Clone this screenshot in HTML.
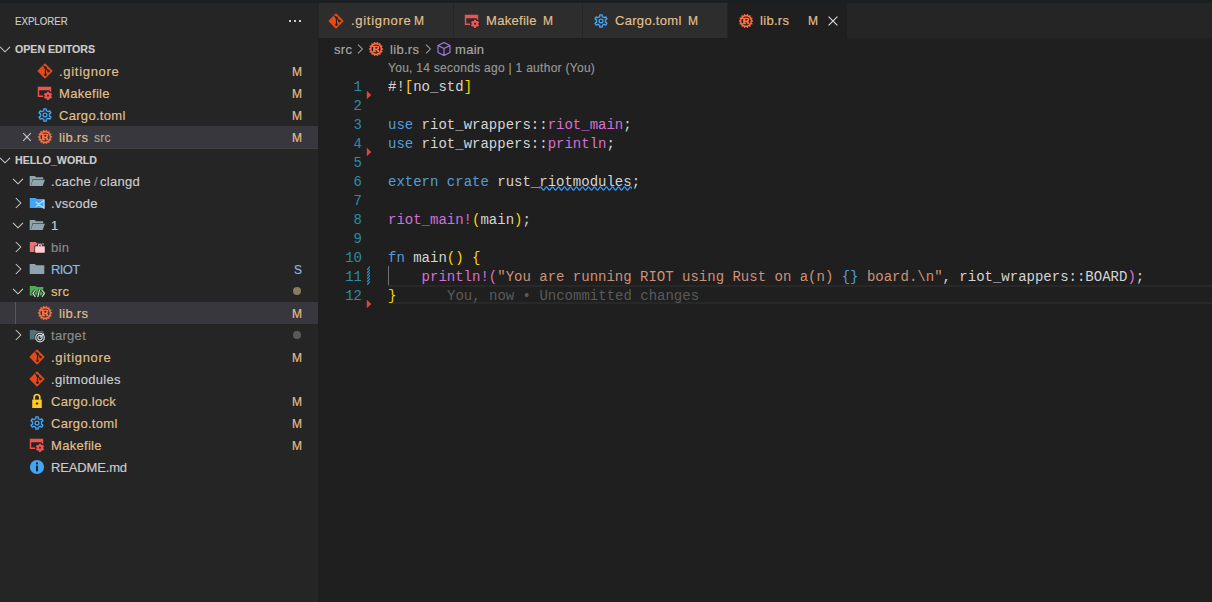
<!DOCTYPE html>
<html><head><meta charset="utf-8">
<style>
*{margin:0;padding:0;box-sizing:border-box}
html,body{width:1212px;height:602px;overflow:hidden;background:#1f1f1f}
body{position:relative;font-family:"Liberation Sans",sans-serif;font-size:13px;color:#cccccc;-webkit-text-stroke:0.15px}
.a{position:absolute;white-space:pre}
.row{position:absolute;left:0;width:318px;height:22px}
.sel{background:#37373d}
.lbl{position:absolute;top:1px;line-height:22px;font-size:13px;letter-spacing:0.3px;white-space:pre}
.mod{color:#e2c08d}
.ign{color:#8c8c8c}
.sub{color:#8db9e2}
.ico{position:absolute}
.badge{position:absolute;left:242px;width:60px;text-align:right;top:1px;line-height:22px;font-size:12px;color:#e2c08d}
.code{position:absolute;-webkit-text-stroke:0;left:388px;padding-top:2px;font-family:"Liberation Mono",monospace;font-size:14px;line-height:19px;height:19px;white-space:pre;color:#d4d4d4}
.ln{position:absolute;-webkit-text-stroke:0;left:330px;width:32px;padding-top:2px;text-align:right;font-family:"Liberation Mono",monospace;font-size:14px;line-height:19px;height:19px;color:#2b8ca8}
.kw{color:#569cd6}
.mac{color:#d670d6}
.str{color:#ce9178}
.br1{color:#ffd700}
.br2{color:#da70d6}
</style></head><body>
<div class="a" style="left:0;top:0;width:1212px;height:3px;background:#1c1f22"></div>
<div class="a" style="left:0;top:3px;width:318px;height:599px;background:#252526"></div>
<div class="a" style="left:318px;top:3px;width:894px;height:35px;background:#252526"></div>
<svg width="0" height="0" style="position:absolute"><defs><symbol id="i-git" viewBox="0 0 16 16"><path d="M8 1.3L14.7 8 8 14.7 1.3 8Z" fill="#e64a19" stroke="#e64a19" stroke-width="1.6" stroke-linejoin="round"/><path d="M6.2 2.6L8.5 4.8V11.6M8.5 4.8L11.5 7.9" fill="none" stroke="#252526" stroke-width="1.2"/><circle cx="8.5" cy="4.8" r="1.3" fill="#252526"/><circle cx="8.5" cy="11.7" r="1.3" fill="#252526"/><circle cx="11.5" cy="8.1" r="1.3" fill="#252526"/></symbol><symbol id="i-make" viewBox="0 0 16 16"><path fill="#ef5350" fill-rule="evenodd" d="M0.8 1.8H14.2V12H0.8Z M2.2 5.2H12.8V10.6H2.2Z"/><path fill="#252526" d="M6.10 10.80 a4.90 4.90 0 1 1 9.80 0 a4.90 4.90 0 1 1 -9.80 0Z"/><path fill="#ef5350" fill-rule="evenodd" d="M9.88 7.70 L9.89 6.65 L12.11 6.65 L12.12 7.70 L13.13 8.28 L14.04 7.76 L15.15 9.69 L14.25 10.22 L14.25 11.38 L15.15 11.91 L14.04 13.84 L13.13 13.32 L12.12 13.90 L12.11 14.95 L9.89 14.95 L9.88 13.90 L8.87 13.32 L7.96 13.84 L6.85 11.91 L7.75 11.38 L7.75 10.22 L6.85 9.69 L7.96 7.76 L8.87 8.28Z M10.00 10.80 a1.00 1.00 0 1 1 2.00 0 a1.00 1.00 0 1 1 -2.00 0Z"/></symbol><symbol id="i-gear" viewBox="0 0 16 16"><path fill="none" stroke="#42a5f5" stroke-width="1.35" stroke-linejoin="round" d="M6.76 3.57 L6.82 1.81 L9.18 1.81 L9.24 3.57 L11.22 4.71 L12.77 3.88 L13.95 5.93 L12.46 6.86 L12.46 9.14 L13.95 10.07 L12.77 12.12 L11.22 11.29 L9.24 12.43 L9.18 14.19 L6.82 14.19 L6.76 12.43 L4.78 11.29 L3.23 12.12 L2.05 10.07 L3.54 9.14 L3.54 6.86 L2.05 5.93 L3.23 3.88 L4.78 4.71Z"/><circle cx="8" cy="8" r="1.9" fill="none" stroke="#42a5f5" stroke-width="1.35"/></symbol><symbol id="i-rust" viewBox="0 0 16 16"><path fill="#ff7043" fill-rule="evenodd" d="M8.56 2.03 L8.92 0.96 L10.22 1.26 L10.08 2.37 L11.10 2.86 L11.88 2.06 L12.93 2.89 L12.32 3.83 L13.02 4.72 L14.08 4.33 L14.66 5.54 L13.70 6.12 L13.95 7.22 L15.07 7.33 L15.07 8.67 L13.95 8.78 L13.70 9.88 L14.66 10.46 L14.08 11.67 L13.02 11.28 L12.32 12.17 L12.93 13.11 L11.88 13.94 L11.10 13.14 L10.08 13.63 L10.22 14.74 L8.92 15.04 L8.56 13.97 L7.44 13.97 L7.08 15.04 L5.78 14.74 L5.92 13.63 L4.90 13.14 L4.12 13.94 L3.07 13.11 L3.68 12.17 L2.98 11.28 L1.92 11.67 L1.34 10.46 L2.30 9.88 L2.05 8.78 L0.93 8.67 L0.93 7.33 L2.05 7.22 L2.30 6.12 L1.34 5.54 L1.92 4.33 L2.98 4.72 L3.68 3.83 L3.07 2.89 L4.12 2.06 L4.90 2.86 L5.92 2.37 L5.78 1.26 L7.08 0.96 L7.44 2.03Z M3.40 8.00 a4.60 4.60 0 1 0 9.20 0 a4.60 4.60 0 1 0 -9.20 0Z"/><path fill="#ff7043" d="M3.6 4.7H9.4C10.6 4.7 11.3 5.5 11.3 6.6 11.3 7.5 10.8 8.1 10.2 8.4 10.8 8.7 11.1 9.2 11.2 9.8L11.6 11.3H9.4L9.1 10C9 9.4 8.7 9.2 8.2 9.2H7.3V10.2H8.3V11.3H4.1V10.2H5.1V5.9H3.6Z"/><path fill="#1f1f1f" d="M7.3 5.9V7.5H8.8C9.3 7.5 9.5 7.2 9.5 6.7S9.3 5.9 8.8 5.9Z"/></symbol><symbol id="i-fold-open" viewBox="0 0 16 16"><path d="M0.7 3H5.8L7.2 4.3H14.2V6.2H3.6L1.8 13H0.7Z" fill="#90a4ae"/><path d="M3.9 6.8H16L13.6 13H1.9Z" fill="#90a4ae"/></symbol><symbol id="i-fold" viewBox="0 0 16 16"><path d="M0.7 3H5.8L7.2 4.3H15.3V13H0.7Z" fill="#90a4ae"/></symbol><symbol id="i-vscode" viewBox="0 0 16 16"><path d="M0.8 2.9H6.6L7.9 4.1H15.3V13H0.8Z" fill="#42a5f5"/><path d="M7.1 11.4L14.9 5.2M7.1 7.2L14.9 13.3M15 5.2V13.3" fill="none" stroke="#bbdefb" stroke-width="1.2" stroke-linecap="round"/></symbol><symbol id="i-bin" viewBox="0 0 16 16"><path d="M0.8 2.9H6.6L7.9 4.1H14.7V13H0.8Z" fill="#e57373"/><rect x="5.4" y="6.5" width="11" height="8" rx="1" fill="#252526"/><path d="M9.3 7.4V5.6H12.5V7.4" fill="none" stroke="#252526" stroke-width="2.4"/><rect x="6.1" y="7.2" width="9.7" height="6.6" rx="0.8" fill="#ffcdd2"/><path d="M9.5 7.4V5.8H12.3V7.4" fill="none" stroke="#ffcdd2" stroke-width="1.1"/></symbol><symbol id="i-src" viewBox="0 0 16 16"><path d="M0.8 2.9H6.6L7.9 4.1H14.3V12.6H0.8Z" fill="#4caf50"/><path d="M6.4 7L3.9 10.4 6.4 13.8M12.9 7L15.5 10.4 12.9 13.8M10.5 6.8L8.8 14.2" fill="none" stroke="#252526" stroke-width="2.8" stroke-linejoin="round"/><path d="M6.4 7L3.9 10.4 6.4 13.8M12.9 7L15.5 10.4 12.9 13.8M10.5 6.8L8.8 14.2" fill="none" stroke="#c8e6c9" stroke-width="1.2"/></symbol><symbol id="i-target" viewBox="0 0 16 16"><path d="M0.8 2.9H6.6L7.9 4.1H14.3V12.6H0.8Z" fill="#546e7a"/><circle cx="11" cy="10.6" r="5.6" fill="#252526"/><circle cx="11" cy="10.6" r="4.3" fill="none" stroke="#cfd8dc" stroke-width="1.2"/><circle cx="11" cy="10.6" r="2.2" fill="none" stroke="#cfd8dc" stroke-width="1.2"/><path d="M11 10.6L15 6.6" stroke="#cfd8dc" stroke-width="1.2"/></symbol><symbol id="i-lock" viewBox="0 0 16 16"><path d="M3.2 6.6H12.8V15H3.2Z" fill="#ffca28"/><path d="M5.2 6.8V4.4C5.2 2.6 6.4 1.5 8 1.5S10.8 2.6 10.8 4.4V6.8" fill="none" stroke="#ffca28" stroke-width="1.7"/><ellipse cx="8" cy="10.6" rx="1.3" ry="1.1" fill="#252526"/></symbol><symbol id="i-info" viewBox="0 0 16 16"><circle cx="8" cy="8" r="7.1" fill="#42a5f5"/><rect x="7" y="6.6" width="2" height="5.8" fill="#252526"/><circle cx="8" cy="4.5" r="1.15" fill="#252526"/></symbol><symbol id="chev-d" viewBox="0 0 16 16"><path d="M3 5.8l5 5 5-5" fill="none" stroke="#cccccc" stroke-width="1.05"/></symbol><symbol id="chev-r" viewBox="0 0 16 16"><path d="M5.8 3l5 5-5 5" fill="none" stroke="#cccccc" stroke-width="1.05"/></symbol><symbol id="chev-bc" viewBox="0 0 16 16"><path d="M6 3.6l4.4 4.4-4.4 4.4" fill="none" stroke="#a0a0a0" stroke-width="1.05"/></symbol></defs></svg>
<div class="a" style="left:15px;top:13px;font-size:11px;line-height:16px;transform:scaleX(0.88);transform-origin:0 0;color:#cccccc">EXPLORER</div>
<div class="a" style="left:289px;top:20px;width:2px;height:2px;background:#cccccc"></div><div class="a" style="left:294px;top:20px;width:2px;height:2px;background:#cccccc"></div><div class="a" style="left:299px;top:20px;width:2px;height:2px;background:#cccccc"></div>
<svg class="a" style="left:-3px;top:41px" width="16" height="16"><use href="#chev-d"/></svg><div class="a" style="left:15px;top:41px;font-size:11px;line-height:16px;font-weight:bold;color:#cccccc;transform:scaleX(0.965);transform-origin:0 0">OPEN EDITORS</div>
<div class="row" style="top:60px"><svg class="ico" style="left:37px;top:3px" width="16" height="16"><use href="#i-git"/></svg><div class="lbl mod" style="left:59px"><span style="letter-spacing:0.7px">.gitignore</span></div><div class="badge" style="color:#e2c08d">M</div></div>
<div class="row" style="top:82px"><svg class="ico" style="left:37px;top:3px" width="16" height="16"><use href="#i-make"/></svg><div class="lbl mod" style="left:59px">Makefile</div><div class="badge" style="color:#e2c08d">M</div></div>
<div class="row" style="top:104px"><svg class="ico" style="left:37px;top:3px" width="16" height="16"><use href="#i-gear"/></svg><div class="lbl mod" style="left:59px">Cargo.toml</div><div class="badge" style="color:#e2c08d">M</div></div>
<div class="row sel" style="top:126px"><div class="lbl" style="left:94px;font-size:12px;color:#b9a888">src</div><svg class="ico" style="left:19px;top:3px" width="16" height="16"><path d="M4.2 4.2l7.6 7.6M11.8 4.2l-7.6 7.6" stroke="#cccccc" stroke-width="1.1"/></svg><svg class="ico" style="left:37px;top:3px" width="16" height="16"><use href="#i-rust"/></svg><div class="lbl mod" style="left:59px">lib.rs</div><div class="badge" style="color:#e2c08d">M</div></div>
<svg class="a" style="left:-3px;top:152px" width="16" height="16"><use href="#chev-d"/></svg><div class="a" style="left:15px;top:152px;font-size:11px;line-height:16px;font-weight:bold;color:#cccccc;transform:scaleX(0.965);transform-origin:0 0">HELLO_WORLD</div>
<div class="a" style="left:0;top:148px;width:318px;height:1px;background:#404040"></div>
<div class="row" style="top:170px"><svg class="ico" style="left:10px;top:3px" width="16" height="16"><use href="#chev-d"/></svg><svg class="ico" style="left:29px;top:3px" width="16" height="16"><use href="#i-fold-open"/></svg><div class="lbl " style="left:51px">.cache<span style="color:#8c8c8c;margin:0 2px 0 3px">/</span>clangd</div></div>
<div class="row" style="top:192px"><svg class="ico" style="left:10px;top:3px" width="16" height="16"><use href="#chev-r"/></svg><svg class="ico" style="left:29px;top:3px" width="16" height="16"><use href="#i-vscode"/></svg><div class="lbl " style="left:51px">.vscode</div></div>
<div class="row" style="top:214px"><svg class="ico" style="left:10px;top:3px" width="16" height="16"><use href="#chev-d"/></svg><svg class="ico" style="left:29px;top:3px" width="16" height="16"><use href="#i-fold-open"/></svg><div class="lbl " style="left:51px">1</div></div>
<div class="row" style="top:236px"><svg class="ico" style="left:10px;top:3px" width="16" height="16"><use href="#chev-r"/></svg><svg class="ico" style="left:29px;top:3px" width="16" height="16"><use href="#i-bin"/></svg><div class="lbl ign" style="left:51px">bin</div></div>
<div class="row" style="top:258px"><svg class="ico" style="left:10px;top:3px" width="16" height="16"><use href="#chev-r"/></svg><svg class="ico" style="left:29px;top:3px" width="16" height="16"><use href="#i-fold"/></svg><div class="lbl sub" style="left:51px"><span style="letter-spacing:-0.6px">RIOT</span></div><div class="badge" style="color:#8db9e2">S</div></div>
<div class="row" style="top:280px"><svg class="ico" style="left:10px;top:3px" width="16" height="16"><use href="#chev-d"/></svg><svg class="ico" style="left:29px;top:3px" width="16" height="16"><use href="#i-src"/></svg><div class="lbl mod" style="left:51px">src</div><div style="position:absolute;left:293px;top:7px;width:8px;height:8px;border-radius:50%;background:#8a7a5e"></div></div>
<div class="row sel" style="top:302px"><div style="position:absolute;left:15px;top:0;width:1px;height:22px;background:#585858"></div><svg class="ico" style="left:37px;top:3px" width="16" height="16"><use href="#i-rust"/></svg><div class="lbl mod" style="left:59px">lib.rs</div><div class="badge" style="color:#e2c08d">M</div></div>
<div class="row" style="top:324px"><svg class="ico" style="left:10px;top:3px" width="16" height="16"><use href="#chev-r"/></svg><svg class="ico" style="left:29px;top:3px" width="16" height="16"><use href="#i-target"/></svg><div class="lbl ign" style="left:51px">target</div><div style="position:absolute;left:293px;top:7px;width:8px;height:8px;border-radius:50%;background:#5a5a5a"></div></div>
<div class="row" style="top:346px"><svg class="ico" style="left:29px;top:3px" width="16" height="16"><use href="#i-git"/></svg><div class="lbl mod" style="left:51px"><span style="letter-spacing:0.7px">.gitignore</span></div><div class="badge" style="color:#e2c08d">M</div></div>
<div class="row" style="top:368px"><svg class="ico" style="left:29px;top:3px" width="16" height="16"><use href="#i-git"/></svg><div class="lbl " style="left:51px">.gitmodules</div></div>
<div class="row" style="top:390px"><svg class="ico" style="left:29px;top:3px" width="16" height="16"><use href="#i-lock"/></svg><div class="lbl mod" style="left:51px">Cargo.lock</div><div class="badge" style="color:#e2c08d">M</div></div>
<div class="row" style="top:412px"><svg class="ico" style="left:29px;top:3px" width="16" height="16"><use href="#i-gear"/></svg><div class="lbl mod" style="left:51px">Cargo.toml</div><div class="badge" style="color:#e2c08d">M</div></div>
<div class="row" style="top:434px"><svg class="ico" style="left:29px;top:3px" width="16" height="16"><use href="#i-make"/></svg><div class="lbl mod" style="left:51px">Makefile</div><div class="badge" style="color:#e2c08d">M</div></div>
<div class="row" style="top:456px"><svg class="ico" style="left:29px;top:3px" width="16" height="16"><use href="#i-info"/></svg><div class="lbl " style="left:51px"><span style="letter-spacing:-0.15px">README.md</span></div></div>
<div class="a" style="left:318px;top:3px;width:135px;height:35px;background:#2d2d2d;border-left:1px solid #252526"></div><svg class="a" style="left:328px;top:13px" width="16" height="16"><use href="#i-git"/></svg><div class="a lbl mod" style="left:351px;top:10px;line-height:22px"><span style="letter-spacing:0.7px">.gitignore</span></div><div class="a" style="left:414px;top:10px;line-height:22px;font-size:12px;color:#e2c08d">M</div>
<div class="a" style="left:453px;top:3px;width:129px;height:35px;background:#2d2d2d;border-left:1px solid #252526"></div><svg class="a" style="left:464px;top:13px" width="16" height="16"><use href="#i-make"/></svg><div class="a lbl mod" style="left:486px;top:10px;line-height:22px">Makefile</div><div class="a" style="left:543px;top:10px;line-height:22px;font-size:12px;color:#e2c08d">M</div>
<div class="a" style="left:582px;top:3px;width:145px;height:35px;background:#2d2d2d;border-left:1px solid #252526"></div><svg class="a" style="left:593px;top:13px" width="16" height="16"><use href="#i-gear"/></svg><div class="a lbl mod" style="left:615px;top:10px;line-height:22px">Cargo.toml</div><div class="a" style="left:688px;top:10px;line-height:22px;font-size:12px;color:#e2c08d">M</div>
<div class="a" style="left:727px;top:3px;width:120px;height:35px;background:#1f1f1f;border-left:1px solid #252526"></div><svg class="a" style="left:738px;top:13px" width="16" height="16"><use href="#i-rust"/></svg><div class="a lbl mod" style="left:760px;top:10px;line-height:22px">lib.rs</div><div class="a" style="left:808px;top:10px;line-height:22px;font-size:12px;color:#e2c08d">M</div>
<svg class="a" style="left:825px;top:13px" width="16" height="16"><path d="M3.6 3.6l8.8 8.8M12.4 3.6l-8.8 8.8" stroke="#e0e0e0" stroke-width="1.1"/></svg>
<div class="a" style="left:334px;top:39px;line-height:22px;font-size:13px;letter-spacing:0.3px;color:#a9a9a9">src</div>
<svg class="a" style="left:352px;top:41px" width="16" height="16"><use href="#chev-bc"/></svg>
<svg class="a" style="left:368px;top:41px" width="16" height="16"><use href="#i-rust"/></svg>
<div class="a" style="left:390px;top:39px;line-height:22px;font-size:13px;letter-spacing:0.3px;color:#a9a9a9">lib.rs</div>
<svg class="a" style="left:420px;top:41px" width="16" height="16"><use href="#chev-bc"/></svg>
<svg class="a" style="left:436px;top:41px" width="16" height="16"><path d="M8 1.5l6 3v7l-6 3-6-3v-7zM2 4.5l6 3 6-3M8 7.5v7" fill="none" stroke="#a47ee6" stroke-width="1.1" stroke-linejoin="round"/></svg>
<div class="a" style="left:455px;top:39px;line-height:22px;font-size:13px;letter-spacing:0.3px;color:#a9a9a9">main</div>
<div class="a" style="left:388px;top:59px;line-height:18px;font-size:12px;letter-spacing:0.28px;color:#999999">You, 14 seconds ago | 1 author (You)</div>
<div class="a" style="left:388px;top:285px;width:824px;height:19px;border-top:2px solid #282828;border-bottom:2px solid #282828"></div>
<div class="ln" style="top:76px">1</div>
<div class="code" style="top:76px">#!<span class="br1">[</span>no_std<span class="br1">]</span></div>
<div class="ln" style="top:95px">2</div>
<div class="code" style="top:95px"></div>
<div class="ln" style="top:114px">3</div>
<div class="code" style="top:114px"><span class="kw">use</span> riot_wrappers::<span class="mac">riot_main</span>;</div>
<div class="ln" style="top:133px">4</div>
<div class="code" style="top:133px"><span class="kw">use</span> riot_wrappers::<span class="mac">println</span>;</div>
<div class="ln" style="top:152px">5</div>
<div class="code" style="top:152px"></div>
<div class="ln" style="top:171px">6</div>
<div class="code" style="top:171px"><span class="kw">extern</span> <span class="kw">crate</span> rust_riotmodules;</div>
<div class="ln" style="top:190px">7</div>
<div class="code" style="top:190px"></div>
<div class="ln" style="top:209px">8</div>
<div class="code" style="top:209px"><span class="mac">riot_main!</span><span class="br1">(</span>main<span class="br1">)</span>;</div>
<div class="ln" style="top:228px">9</div>
<div class="code" style="top:228px"></div>
<div class="ln" style="top:247px">10</div>
<div class="code" style="top:247px"><span class="kw">fn</span> main<span class="br1">()</span> <span class="br1">{</span></div>
<div class="ln" style="top:266px">11</div>
<div class="code" style="top:266px">    <span class="mac">println!</span><span class="br2">(</span><span class="str">"You are running RIOT using Rust on a(n) </span><span class="kw">{}</span><span class="str"> board.\n"</span>, riot_wrappers::BOARD<span class="br2">)</span>;</div>
<div class="ln" style="top:285px">12</div>
<div class="code" style="top:285px"><span class="br1">}</span></div>
<div class="code" style="left:447px;top:285px;color:#5a5a5a">You, now • Uncommitted changes</div>
<div class="a" style="left:388px;top:266px;width:1px;height:19px;background:#707070"></div>
<svg class="a" style="left:366px;top:90px" width="6" height="10"><path d="M0.8 0.8L5.2 5 0.8 9.2z" fill="#e2453f"/></svg>
<svg class="a" style="left:366px;top:147px" width="6" height="10"><path d="M0.8 0.8L5.2 5 0.8 9.2z" fill="#e2453f"/></svg>
<svg class="a" style="left:366px;top:299px" width="6" height="10"><path d="M0.8 0.8L5.2 5 0.8 9.2z" fill="#e2453f"/></svg>
<svg class="a" style="left:366px;top:266px" width="5" height="19"><path d="M1.6 3.60 C1.2 2.60 3.8 1.80 3.4 0.80 M1.6 6.60 C1.2 5.60 3.8 4.80 3.4 3.80 M1.6 9.60 C1.2 8.60 3.8 7.80 3.4 6.80 M1.6 12.60 C1.2 11.60 3.8 10.80 3.4 9.80 M1.6 15.60 C1.2 14.60 3.8 13.80 3.4 12.80 M1.6 18.60 C1.2 17.60 3.8 16.80 3.4 15.80" fill="none" stroke="#1b95cc" stroke-width="1.25" stroke-linecap="round"/></svg>
<svg class="a" style="left:539px;top:186px" width="93" height="6"><path d="M0 2.5 q1.5 -3 3 0 t3 0 q1.5 -3 3 0 t3 0 q1.5 -3 3 0 t3 0 q1.5 -3 3 0 t3 0 q1.5 -3 3 0 t3 0 q1.5 -3 3 0 t3 0 q1.5 -3 3 0 t3 0 q1.5 -3 3 0 t3 0 q1.5 -3 3 0 t3 0 q1.5 -3 3 0 t3 0 q1.5 -3 3 0 t3 0 q1.5 -3 3 0 t3 0 q1.5 -3 3 0 t3 0 q1.5 -3 3 0 t3 0 q1.5 -3 3 0 t3 0 q1.5 -3 3 0 t3 0" fill="none" stroke="#3794ff" stroke-width="1.3"/></svg>
</body></html>
